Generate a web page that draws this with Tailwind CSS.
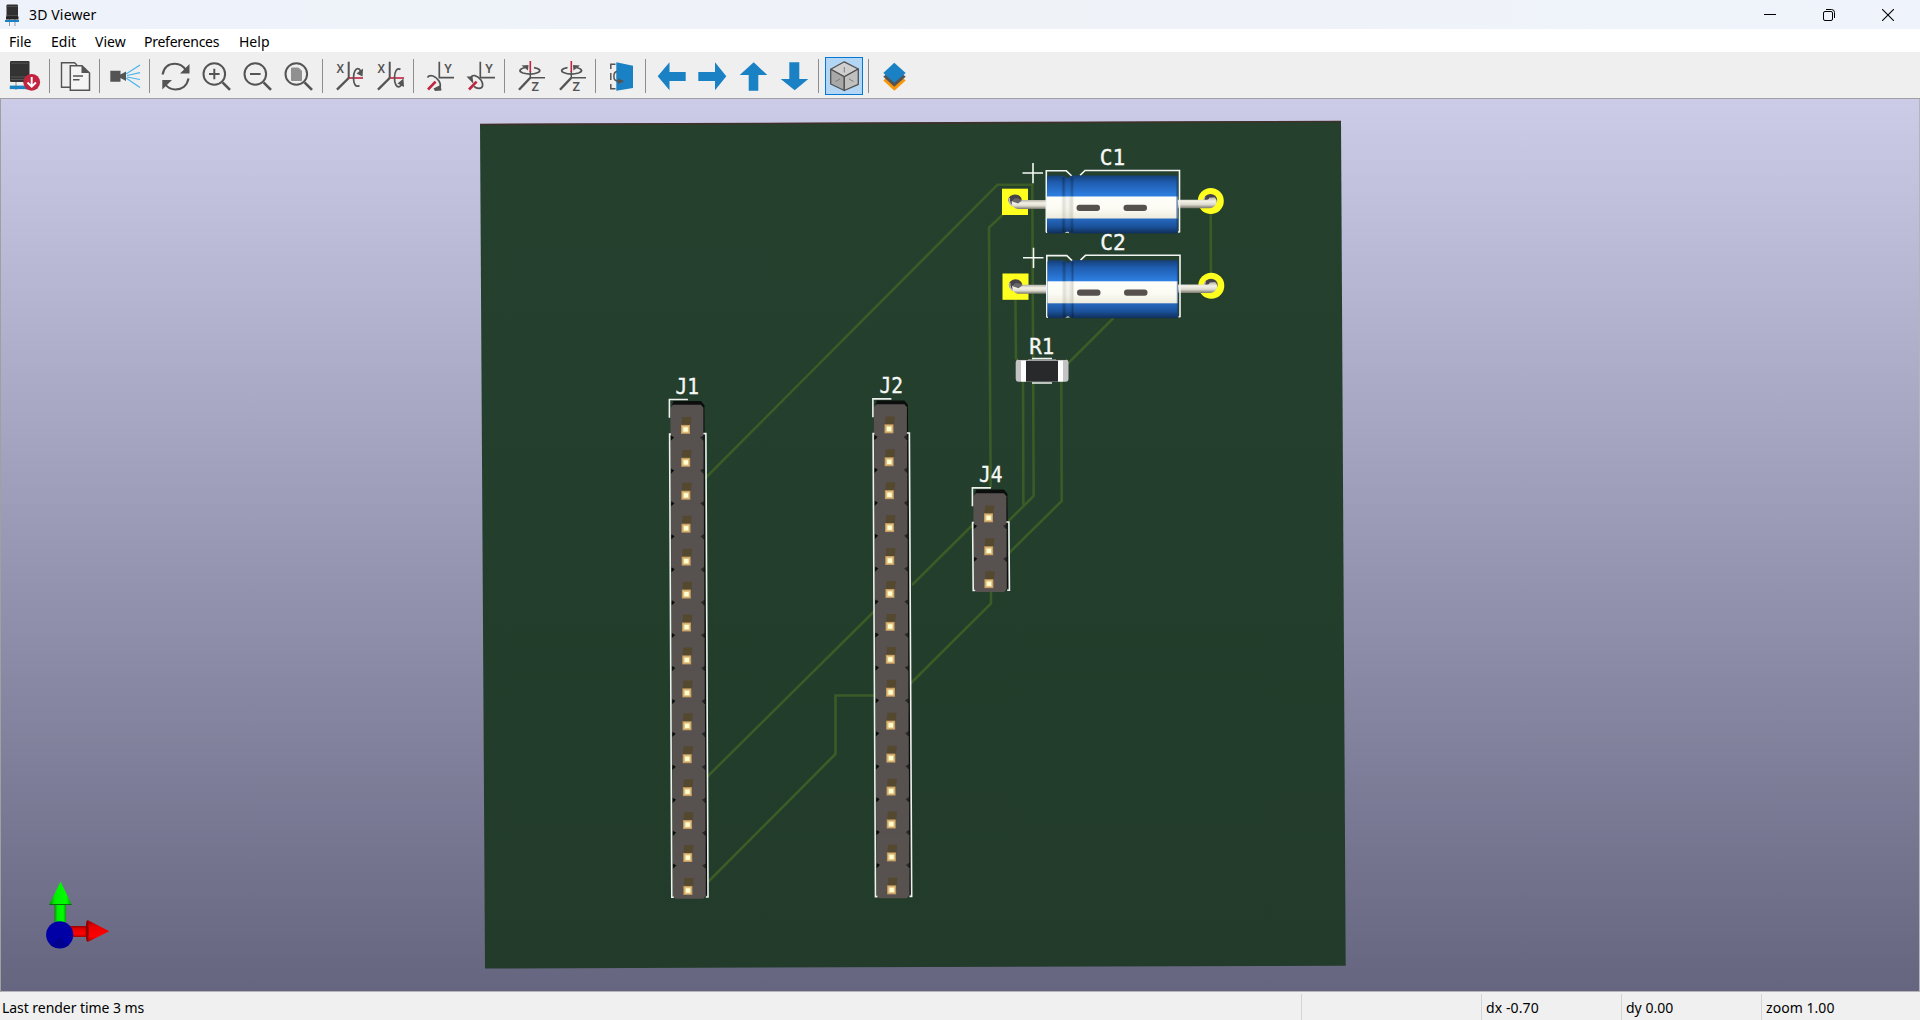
<!DOCTYPE html>
<html lang="en">
<head>
<meta charset="utf-8">
<title>3D Viewer</title>
<script src="https://cdn.jsdelivr.net/npm/@tailwindcss/browser@4"></script>
</head>
<body class="w-[1920px] h-[1020px] overflow-hidden flex flex-col bg-[#efefef] text-black text-[14px] font-['Noto_Sans','Open_Sans',sans-serif]">

<!-- Title bar -->
<header class="h-[29px] shrink-0 flex items-center bg-gradient-to-r from-[#eef2fb] via-[#eff3f8] to-[#eff3fb] pl-[4px]">
  <svg class="w-4 h-[22px] shrink-0" viewBox="0 0 16 22">
    <path d="M5.5 15v7M11 15v7" stroke="#999" stroke-width="1"/>
    <rect x="2.5" y="0.5" width="11.500" height="13.500" rx="1" fill="#303030"/>
    <path d="M2.500 2.500h11.500M2.500 11.500h11.500" stroke="#555" stroke-width=".8"/>
    <rect x="2" y="12.500" width="12.500" height="3" fill="#252525"/>
    <rect x="1" y="16" width="14" height="2" fill="#1a81c4"/>
  </svg>
  <h1 class="ml-[9px] whitespace-nowrap tracking-[0.15px]">3D Viewer</h1>
  <div class="ml-auto flex pr-[26px] gap-[47px]">
    <svg class="w-3 h-3" viewBox="0 0 12 12"><path d="M0 5.500h12" stroke="#000"/></svg>
    <svg class="w-3 h-3" viewBox="0 0 12 12" fill="none" stroke="#000"><rect x=".5" y="2.500" width="9" height="9" rx="1.500"/><path d="M3 .5h5.500a3 3 0 0 1 3 3V9"/></svg>
    <svg class="w-3 h-3" viewBox="0 0 12 12"><path d="M0 0l12 12M12 0L0 12" stroke="#000" stroke-width="1.100"/></svg>
  </div>
</header>

<!-- Menu bar -->
<nav class="h-[23px] shrink-0 flex items-center bg-white pl-[9px] pt-px whitespace-nowrap">
  <span class="w-[42px]">File</span>
  <span class="w-[44px]">Edit</span>
  <span class="w-[49px]">View</span>
  <span class="w-[95px] tracking-[-0.25px]">Preferences</span>
  <span>Help</span>
</nav>

<!-- Toolbar -->
<div id="toolbar" class="h-[46px] shrink-0 flex items-center pl-1 pt-0.5 bg-[#efefef]"></div>

<!-- 3D canvas -->
<main class="h-[894px] shrink-0 border-t border-l border-[#a0a0a0]">
<svg class="block w-[1919px] h-[893px]" viewBox="1 99 1919 893">
  <defs>
    <linearGradient id="sky" x1="0" y1="0" x2="0" y2="1"><stop offset="0" stop-color="#cccbe8"/><stop offset="1" stop-color="#666580"/></linearGradient>
    <linearGradient id="pcb" x1="0" y1="0" x2="0" y2="1"><stop offset="0" stop-color="#25412e"/><stop offset="1" stop-color="#223b2a"/></linearGradient>
    <linearGradient id="blue" x1="0" y1="0" x2="0" y2="1">
      <stop offset="0" stop-color="#163f78"/><stop offset=".12" stop-color="#1f5cae"/><stop offset=".36" stop-color="#2e80e3"/>
      <stop offset=".74" stop-color="#2769bf"/><stop offset=".88" stop-color="#1b529b"/><stop offset="1" stop-color="#102e58"/>
    </linearGradient>
    <linearGradient id="cream" x1="0" y1="0" x2="0" y2="1"><stop offset="0" stop-color="#fffffb"/><stop offset=".6" stop-color="#fbfaf2"/><stop offset="1" stop-color="#ecebdd"/></linearGradient>
    <linearGradient id="lead" x1="0" y1="0" x2="0" y2="1"><stop offset="0" stop-color="#b3b0a5"/><stop offset=".35" stop-color="#f4f1e6"/><stop offset=".65" stop-color="#dedbd0"/><stop offset="1" stop-color="#77756c"/></linearGradient>
    <linearGradient id="groove" x1="0" y1="0" x2="1" y2="0"><stop offset="0" stop-color="#000" stop-opacity="0"/><stop offset=".2" stop-color="#000" stop-opacity=".28"/><stop offset=".4" stop-color="#000" stop-opacity=".02"/><stop offset=".7" stop-color="#000" stop-opacity=".05"/><stop offset=".85" stop-color="#000" stop-opacity=".28"/><stop offset="1" stop-color="#000" stop-opacity="0"/></linearGradient>
    <linearGradient id="grooveLight" x1="0" y1="0" x2="1" y2="0"><stop offset="0" stop-color="#8a8878" stop-opacity="0"/><stop offset=".2" stop-color="#8a8878" stop-opacity=".25"/><stop offset=".5" stop-color="#8a8878" stop-opacity=".05"/><stop offset=".85" stop-color="#8a8878" stop-opacity=".3"/><stop offset="1" stop-color="#8a8878" stop-opacity="0"/></linearGradient>
    <linearGradient id="gs" x1="0" x2="1"><stop offset="0" stop-color="#0a8a0a"/><stop offset=".25" stop-color="#00ee00"/><stop offset=".75" stop-color="#00ff00"/><stop offset="1" stop-color="#0a9a0a"/></linearGradient>
    <linearGradient id="rs" x1="0" y1="0" x2="0" y2="1"><stop offset="0" stop-color="#980000"/><stop offset=".3" stop-color="#e80000"/><stop offset=".75" stop-color="#ff0000"/><stop offset="1" stop-color="#a00000"/></linearGradient>

    <!-- Axial electrolytic capacitor -->
    <g id="cap">
      <rect x="1002" y="188.700" width="26" height="26.300" fill="#ffff1f"/>
      <circle cx="1210.800" cy="201" r="13" fill="#ffff1f"/>
      <ellipse cx="1015" cy="200" rx="6.700" ry="5.500" fill="#46424a"/>
      <ellipse cx="1210.500" cy="200" rx="6.700" ry="6" fill="#46424a"/>
      <path d="M1009.500 198q-1 5 3 8M1205 197q-2 3 0 5" stroke="#b9b7d0" fill="none" stroke-width="1.300"/>
      <path d="M1011.500 201.500q2-2 5-1.500H1047v9h-29q-6-.5-6.500-7.500z" fill="url(#lead)"/>
      <path d="M1177 199.800h28q4.500 0 4-2l5.500-.5q3.500 3 1.500 7-2.500 4-7 4H1177z" fill="url(#lead)"/>
      <path d="M1012.500 201.500q1-4.500 5.500-3l4 2-4 3z" fill="#69676a"/>
      <path d="M1046.300 232.300V170.800h20l5.500 5.200M1080 175.300l5-4.800h94.500v62M1046 232.300h1.500M1178 232h1.500M1065 232h4" fill="none" stroke="#f2f4f1" stroke-width="1.600"/>
      <path d="M1022.500 173h20.500M1033 163v20.300" stroke="#f6f8f6" stroke-width="1.600"/>
      <path d="M1049 175.500h14l4.500 2.500 4.500-2.500h104q1.500 0 1.500 2v54q0 2-1.500 2h-104l-4.500-2-4.500 2h-14q-2 0-2-2v-54q0-2 2-2z" fill="url(#blue)"/>
      <rect x="1047" y="196.500" width="130.500" height="22" fill="url(#cream)"/>
      <rect x="1061" y="177" width="13" height="19.500" fill="url(#groove)"/><rect x="1061" y="218.500" width="13" height="14" fill="url(#groove)"/>
      <rect x="1061" y="196.500" width="13" height="22" fill="url(#grooveLight)"/>
      <rect x="1176.300" y="177" width="1.400" height="55" fill="#173e74" opacity=".55"/>
      <rect x="1076.500" y="204.800" width="23.500" height="6.200" rx="3" fill="#56514f"/>
      <rect x="1123.500" y="204.800" width="23.500" height="6.200" rx="3" fill="#56514f"/>
    </g>
  </defs>

  <rect x="0" y="98" width="1920" height="894" fill="url(#sky)"/>
  <path d="M480 124L1341 121l4.700 844.700L485 968.500z" fill="url(#pcb)"/>
  <path d="M480 124.500L1341 121.500" stroke="#40302a" stroke-width="1.600"/>

  <!-- Copper tracks below the solder mask -->
  <g fill="none" stroke="#3b5b27" stroke-width="2.600">
    <path d="M705 478.500L997.500 184.700H1032.300L1033.700 496 1006 523.500"/>
    <path d="M1003 214.500L989 227.500 990.700 488M1210.700 213L1210.900 275M1015.400 298L1016 358.500 1023 365.500 1023.400 506"/>
    <path d="M1113.500 318L1061.300 370 1061.700 501 1007 555"/>
    <path d="M973 524.500L912 585M876 609.500L707 777M991 590V603.500L910 684M876 695.500H835.500V754L708 882"/>
  </g>

  <use href="#cap"/>
  <use href="#cap" x=".5" y="84.800"/>

  <!-- R1 chip resistor -->
  <path d="M1032 358.500h20M1032 383h20" stroke="#eef1ee" stroke-width="1.500"/>
  <rect x="1015.700" y="359.500" width="52.800" height="22.300" rx="3" fill="#c3c3c3"/>
  <rect x="1021" y="360.700" width="42" height="20.800" fill="#fff"/>
  <rect x="1026" y="360.700" width="32" height="21" fill="#28292b"/>
  <path d="M1018 359.500h10M1056 359.500h10" stroke="#33402f" stroke-width="1.200"/>

  <g id="headers"></g>

  <g fill="#f6f8f6" stroke="#f6f8f6" stroke-width=".35" font-family="DejaVu Sans Mono, monospace" font-size="20.500">
    <text x="1099.700" y="165" textLength="25.500" lengthAdjust="spacingAndGlyphs">C1</text>
    <text x="1100.200" y="249.500" textLength="25.500" lengthAdjust="spacingAndGlyphs">C2</text>
    <text x="1029.300" y="354" textLength="25" lengthAdjust="spacingAndGlyphs">R1</text>
    <text x="675.500" y="393.700" textLength="23.500" lengthAdjust="spacingAndGlyphs">J1</text>
    <text x="879.500" y="393" textLength="23.500" lengthAdjust="spacingAndGlyphs">J2</text>
    <text x="979" y="482" textLength="23.500" lengthAdjust="spacingAndGlyphs">J4</text>
  </g>

  <!-- Axis gizmo -->
  <rect x="54.500" y="902" width="11.500" height="24" fill="url(#gs)"/>
  <path d="M60.500 881.500L71.700 904.500H49.200z" fill="url(#gs)"/><path d="M49.200 904.500h22.500" stroke="#0a6a12" stroke-width="1"/>
  <rect x="69" y="926" width="19" height="11" fill="url(#rs)"/>
  <path d="M87.500 920L109.300 931.300 87.500 942z" fill="url(#rs)"/><ellipse cx="87.200" cy="931" rx="1.500" ry="10.800" fill="#8a0000"/>
  <circle cx="59.700" cy="934.800" r="13.600" fill="#0000a6"/>
  <path d="M59.700 937l-9 8.500q9 5 18 0z" fill="#000090"/>
  <path d="M1919.500 99v893M0 991.500h1920" stroke="#b4b4ba"/>
</svg>
</main>

<!-- Status bar -->
<footer class="h-[28px] flex-1 flex bg-[#f0f0f0] whitespace-nowrap pt-0.5 leading-[27px]">
  <div class="w-[1301px] pl-[2px] tracking-[-0.05px]">Last render time 3 ms</div>
  <div class="w-[180px] border-l border-[#d4d4d4]"></div>
  <div class="w-[140px] border-l border-[#d4d4d4] pl-[4px] tracking-[0.1px]">dx -0.70</div>
  <div class="w-[140px] border-l border-[#d4d4d4] pl-[4px]">dy 0.00</div>
  <div class="flex-1 border-l border-[#d4d4d4] pl-[4px] tracking-[0.05px]">zoom 1.00</div>
</footer>

<script>
// Toolbar icons, each on a 32x32 grid; "|" is a separator.
const G = '#545454', R = '#c2233f', B = '#1a81c4';
const lens = inner => `<g fill="none" stroke="${G}" stroke-width="2"><circle cx="14.300" cy="14" r="10.800"/><path d="M22.500 22.300l7.500 7.500" stroke-width="2.600"/>${inner}</g>`;
const letter = (c, x, y) => `<text x="${x}" y="${y}" font-family="Noto Sans, sans-serif" font-weight="600" font-size="13" textLength="7.500" lengthAdjust="spacingAndGlyphs" fill="${G}">${c}</text>`;
const line = (d, c = G, w = 2) => `<path d="${d}" fill="none" stroke="${c}" stroke-width="${w}"/>`;
const solid = (d, c = G) => `<path d="${d}" fill="${c}"/>`;
const axisX = letter('X', 4.5, 13) + line('M16.700 1.700V18') + line('M16.700 18H31', R, 1.600) + line('M16.700 18L5 29.700', G, 2.400);
const axisY = letter('Y', 21.3, 13) + line('M16.300 1.700V17.700H31', G, 1.700) + line('M12.600 21.700L5 29.500', R, 2.600);
const axisZ = letter('Z', 17.5, 30.7) + line('M16.300 11V17.700H31', G, 1.500) + line('M16.300 17.700L5 29.700', G, 2.400) + line('M16.300 1V12', R, 1.600);
const icons = [
  `<path d="M7 21v9M18 21v9" stroke="#aaa" stroke-width="1.500"/><rect x="1" y="1" width="19.500" height="21" rx="1.200" fill="#333"/><path d="M2 3.200h17.500M1.500 17h18.500M1.500 19.500h18.500" stroke="#555"/><rect x=".8" y="25.600" width="17" height="3.500" fill="${B}"/><circle cx="22.700" cy="22.300" r="8.400" fill="${R}"/><path d="M22.700 17v9.500M18.500 22.500l4.200 4.200 4.200-4.200" fill="none" stroke="#fff" stroke-width="1.900"/>`,
  '|',
  `<path d="M11 27.300H2.500V2.700H15.500L18 5" fill="none" stroke="${G}" stroke-width="1.400"/><path d="M11.300 5.700H23L30.500 13V30.200H11.300z" fill="#f4f4f4" stroke="${G}" stroke-width="1.500"/><path d="M22.500 5.500V13H30.700z" fill="${G}"/><path d="M14 16h10M14 19.800h6.500" stroke="${G}" stroke-width="1.500"/>`,
  '|',
  solid('M1.300 10.800H11.500V21.700H1.300zM11.500 14.500L17 11.500V21L11.500 18z') + line('M17 14L31 5M18 15.500L31 12.700M18 17L31 19.500M17 18L31 27.500', '#47b5e9', 1.200),
  '|',
  line('M3.600 14.500C5 7 10 3.800 16 3.800c5 0 8.500 2.500 11 6.500M29.500 18.500C28 26 22.500 29.500 16.500 29.500c-5 0-8-2-10.500-5.500', G, 2.100) + solid('M30.500 4v9.500H21zM3.300 29.500V20H13z'),
  lens('<path d="M9 14h10.600M14.300 8.700v10.600"/>'),
  lens('<path d="M9 14h10.600"/>'),
  lens('<path d="M9.500 8h7l3 3v9.500H9.500z" fill="#909090" stroke="#909090" stroke-width="1"/>'),
  '|',
  axisX + line('M27.500 25.500C23.500 28 21.500 23.500 21.500 18c0-6 2-9.500 4.500-9.300 1.500 0 2.300 1.500 3 4', G, 1.700) + solid('M31 8.500L30.500 16.500 24.500 13.500z'),
  axisX + line('M27.500 9.500C24 7 21.500 11.500 21.500 18c0 6 2 9 4.500 8.800 1.500 0 2.300-1.500 3-3.500', G, 1.700) + solid('M30.500 18.500L31 27 24.500 23.500z'),
  '|',
  axisY + line('M4.500 17.500C7 13.500 13 16.500 16 21c2 3.500 2 6.500-1 7.500', G, 1.700) + solid('M18.500 30.500L12 31 10.500 28.500 17.500 25z'),
  axisY + line('M6 19C8 13.500 13 15 17 20c2.500 4 2.500 8-2 8.300-2 0-4-1-5-2', G, 1.700) + solid('M2.500 16.500L8.500 16.500 9.500 24z'),
  '|',
  axisZ + line('M11 7.500C5 9 4.500 11.500 9 13c5 1.500 11 1.200 15-.5 3.500-2 1.500-4-4-4.800', G, 1.800) + solid('M7.500 5.500L14.500 5 14 10.500z'),
  axisZ + line('M21.500 7.500C27.500 9 28 11.500 23.500 13c-5 1.500-11 1.200-15-.5-3.500-2-1.500-4 4-4.800', G, 1.800) + solid('M25 5.500L18 5 18.500 10.500z'),
  '|',
  line('M10.500 4.300H5.800V9M5.800 13V20M5.800 24V28.700H10.500', G, 1.500) + solid('M11.300 2.300L28 5.700V28L11.300 30.700z', B) + line('M12 11.500C8 12 7.500 20.500 12.500 21.200H15', G, 1.500) + solid('M13 18.500L19.500 21.200 13 24z'),
  '|',
  solid('M2.700 16.300L14.500 2.300V12H30.700V21H14.500V30.300z', B),
  solid('M30.300 16.300L19 2.300V12H2.300V21H19V30.300z', B),
  solid('M16.700 2.300L30.300 15H21.300V30.700H11.700V15H2.700z', B),
  solid('M16.700 30.300L30.300 19H21.300V2.300H11.300V19H2.700z', B),
  '|',
  `*<g stroke="#505050" stroke-width="1.300" stroke-linejoin="round"><path d="M16.300 1.800L30.300 9 16.300 16.700 2.700 9.300z" fill="#cfcfcf"/><path d="M2.700 9.300L16.300 16.700V30.500L2.700 24z" fill="#a8a8a8"/><path d="M30.300 9V24.300L16.300 30.500V16.700z" fill="#c0c0c0"/></g><path d="M16.300 7v5.500M12 19l-4.500 2.500M21 19l4.500 2.500" stroke="#777" stroke-width=".9"/>`,
  '|',
  solid('M16.300 10.500L27.700 20.500 16.300 30.700 5.300 20.500z', '#f8960a') + solid('M16.300 6.500L27.700 16.800 16.300 26.700 5.300 16.800z') + solid('M16.300 2.700L27.700 13 16.300 22.700 5.300 13z', B)
];
document.getElementById('toolbar').innerHTML = icons.map(i => {
  if (i === '|') return '<div class="w-px h-[34px] mx-1 shrink-0 bg-[#8d8d8d]"></div>';
  const on = i[0] === '*';
  return `<button class="w-[41px] h-[38px] shrink-0 pl-[2px]"><span class="flex items-center justify-center w-[38px] h-[38px] ${on ? 'bg-[#b3d6f5] border border-[#0078d7]' : ''}"><svg class="w-8 h-8 shrink-0 overflow-visible" viewBox="0 0 32 32">${on ? i.slice(1) : i}</svg></span></button>`;
}).join('');

// Pin headers: cx/cy is the first pin, lean is the total sideways drift to the last pin.
function header(cx, cy, n, lean) {
  const p = 32.93, last = n - 1, k = last ? lean / last : 0;
  const X = i => cx + k * i, Y = i => cy + p * i;
  const end = Y(last) + 7.7;
  let s = `<path d="M${cx - 14} ${cy - 22}L${cx - 12} ${cy - 28.2}H${cx + 15.5}L${cx + 19} ${cy - 24}L${X(last) + 19.500} ${end - 4}L${X(last) + 17} ${end - 1}L${cx - 14} ${cy}z" fill="#0c0e0d"/>`;
  for (let i = 0; i < n; i++) {
    const x = X(i), y = Y(i), b = i === last ? y + 8.500 : y + 9.500;
    s += `<path d="M${x - 12.500} ${y - 24.500}H${x + 15.500}L${x + 18} ${y - 21.500}V${b - 3.500}L${x + 15.500} ${b}H${x - 12.500}L${x - 15} ${b - 3}V${y - 21.500}z" fill="#575250"/>`;
  }
  for (let i = 0; i < last; i++) {
    const x = X(i), y = Y(i) + 8.700;
    s += `<path d="M${x - 14.500} ${y - 2.500}l3.300 2-3.300 3z" fill="#0b0d0c"/><path d="M${x + 18} ${y - 2.500}l-3.500 2 3.500 3z" fill="#292a29"/><path d="M${x - 12} ${y}H${x + 15}V${y + 2}H${x - 12}z" fill="#575250"/>`;
  }
  for (let i = 0; i < n; i++) {
    const x = X(i), y = Y(i);
    s += `<path d="M${x - 3.300} ${y - 12.300}H${x + 6}L${x + 4.700} ${y}H${x - 4.300}z" fill="#54482f"/><rect x="${x - 4.400}" y="${y - 4.400}" width="9" height="9" fill="#c49c61"/><rect x="${x - 3.300}" y="${y - 3.300}" width="6.800" height="6.800" fill="#e3c383"/><rect x="${x - 2}" y="${y - 2}" width="4.400" height="4.400" fill="#ffffd2"/>`;
  }
  const sl = lean * .8;
  s += `<g fill="none" stroke="#eef1ee" stroke-width="1.600"><path d="M${cx - 16} ${cy - 11.500}V${cy - 29.800}H${cx + 2.500}"/><path d="M${cx - 14.500} ${cy + 4.800}H${cx - 15.800}L${cx - 15.500 + sl} ${end - .8}H${cx - 13.500 + sl}"/><path d="M${cx + 18} ${cy + 4.300}H${cx + 20.500}L${cx + 20.700 + sl} ${end - 1}H${cx + 18.500 + sl}"/></g>`;
  return s;
}
document.getElementById('headers').innerHTML = header(685.4, 429.3, 15, 2.4) + header(888.9, 428.7, 15, 2.6) + header(988.4, 517.7, 3, .4);
</script>
</body>
</html>
